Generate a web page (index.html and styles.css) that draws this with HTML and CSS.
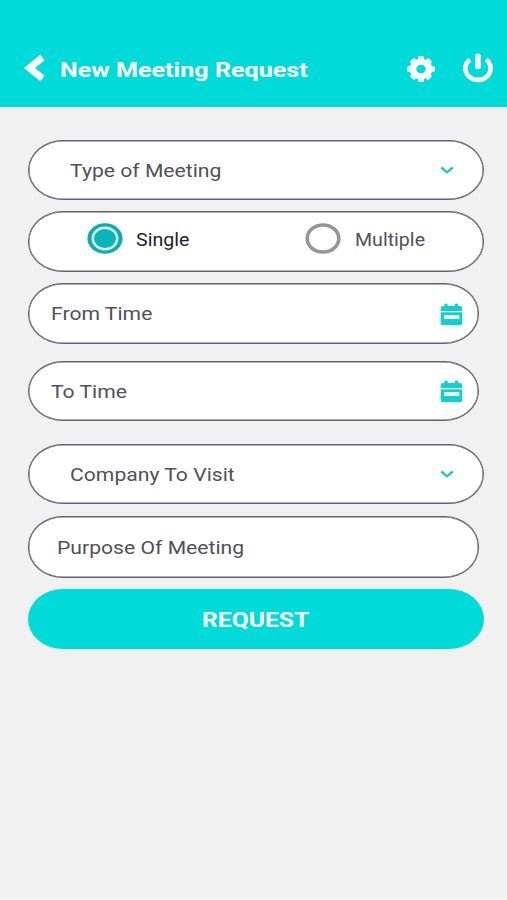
FILE: index.html
```
<!DOCTYPE html>
<html lang="en">

<head>
	<meta charset="UTF-8">
	<title>New Meeting Request</title>
	<link rel="stylesheet" href="styles.css">
</head>

<body>
	<header class="topbar">
		<svg class="back" width="22" height="28" viewBox="0 0 22 28"><path d="M19.500 3.500L6.500 14L19.500 24.500" fill="none" stroke="#fff" stroke-width="7"/></svg>
		<h1><span class="text title">New Meeting Request</span></h1>
		<svg class="gear" width="30" height="28" viewBox="0 0 30 28">
			<g fill="#fff">
				<ellipse cx="15" cy="14" rx="11.300" ry="10.300"/>
				<rect x="12" y="1" width="6" height="26" rx="1.5"/>
				<rect x="1" y="11.2" width="28" height="5.6" rx="1.5"/>
				<rect x="12" y="1" width="6" height="26" rx="1.5" transform="rotate(45 15 14)"/>
				<rect x="12" y="1" width="6" height="26" rx="1.5" transform="rotate(-45 15 14)"/>
			</g>
			<ellipse cx="15" cy="14" rx="4.7" ry="4.3" fill="#00dad8"/>
		</svg>
		<svg class="power" width="32" height="30" viewBox="0 0 32 30"><path d="M8 6.7A12.6 11.4 0 1 0 24 6.7" fill="none" stroke="#fff" stroke-width="4.600"/><path d="M16 3.3V13.5" stroke="#fff" stroke-width="5.500" stroke-linecap="round"/></svg>
	</header>

	<form class="form">
		<div class="field select type">
			<span class="text">Type of Meeting</span>
			<svg class="chevron" width="14" height="9" viewBox="0 0 14 9"><path d="M1.300 1.500L7 6.300L12.700 1.500" fill="none" stroke="#22c4c4" stroke-width="2.4"/></svg>
		</div>

		<div class="field radios">
			<label class="option">
				<svg width="36" height="31" viewBox="0 0 36 31"><ellipse cx="18" cy="15.5" rx="17.6" ry="15.2" fill="#12abae"/><ellipse cx="18" cy="15.5" rx="12.2" ry="10.8" fill="#08b5b8" stroke="#d9fbfb" stroke-width="2.4"/></svg>
				<span class="text">Single</span>
			</label>
			<label class="option">
				<svg width="36" height="31" viewBox="0 0 36 31"><ellipse cx="18" cy="15.5" rx="15.8" ry="13.5" fill="#fff" stroke="#969696" stroke-width="3.6"/></svg>
				<span class="text">Multiple</span>
			</label>
		</div>

		<div class="field time from">
			<span class="text">From Time</span>
			<svg class="calendar" width="23" height="23" viewBox="0 0 23 23"><path d="M.7 8V5.2Q.7 3 3 3H4.300V1.800Q4.300.5 6 .5T7.700 1.800V3H14.800V1.800Q14.800.5 16.500.5T18.200 1.800V3H20Q22.300 3 22.300 5.200V8Z" fill="#13d0cd"/><path fill-rule="evenodd" d="M.7 9.200H22.300V20.300Q22.300 22.300 20.300 22.300H2.700Q.7 22.300.7 20.300ZM4 12.200V16H19.300V12.200Z" fill="#13d0cd"/></svg>
		</div>

		<div class="field time to">
			<span class="text">To Time</span>
			<svg class="calendar" width="23" height="23" viewBox="0 0 23 23"><path d="M.7 8V5.2Q.7 3 3 3H4.300V1.800Q4.300.5 6 .5T7.700 1.800V3H14.800V1.800Q14.800.5 16.500.5T18.200 1.800V3H20Q22.300 3 22.300 5.200V8Z" fill="#13d0cd"/><path fill-rule="evenodd" d="M.7 9.200H22.300V20.300Q22.300 22.300 20.300 22.300H2.700Q.7 22.300.7 20.300ZM4 12.200V16H19.300V12.200Z" fill="#13d0cd"/></svg>
		</div>

		<div class="field select company">
			<span class="text">Company To Visit</span>
			<svg class="chevron" width="14" height="9" viewBox="0 0 14 9"><path d="M1.300 1.500L7 6.300L12.700 1.500" fill="none" stroke="#22c4c4" stroke-width="2.4"/></svg>
		</div>

		<div class="field purpose">
			<span class="text">Purpose Of Meeting</span>
		</div>

		<button type="button" class="submit"><span class="text">REQUEST</span></button>
	</form>
</body>

</html>
```
FILE: styles.css
```
body {
  margin: 0;
  height: 900px;
  box-sizing: border-box;
  background-color: #f1f1f2;
  border-bottom: 2px solid #f6f6f6;
  font-family: Roboto, "Liberation Sans", sans-serif;
  color: #50505c;
}

/* wide lettering */
.text {
  display: inline-block;
  white-space: nowrap;
  transform: scaleX(1.175);
  transform-origin: left center;
}

.topbar {
  display: flex;
  align-items: center;
  height: 107px;
  padding: 31px 13px 0 23px;
  box-sizing: border-box;
  background-color: #00dad8;
  color: #fff;
}

.topbar h1 {
  flex: 1;
  margin: 2px 0 0 15px;
  font-size: 20.5px;
  line-height: 24px;
  font-weight: 700;
}

.title {
  transform: scaleX(1.225);
}

.back {
  margin-bottom: 2px;
}

.gear {
  margin-right: 26px;
}

.power {
  margin-bottom: 2px;
}

.form {
  padding: 33px 23px 0 28px;
}

.field {
  display: flex;
  align-items: center;
  height: 60px;
  margin-bottom: 12px;
  padding-top: 1px;
  box-sizing: border-box;
  border: 1px solid #62626c;
  box-shadow: inset 0 0 0 0.5px #62626c;
  border-radius: 35px / 30px;
  background-color: #fff;
  font-size: 18px;
  line-height: 22px;
}

.select {
  justify-content: space-between;
  padding-left: 41px;
  padding-right: 29px;
}

.type {
  margin-bottom: 11px;
}

.radios {
  height: 61px;
  padding: 0 0 6px 58px;
  font-size: 17.5px;
}

.option {
  display: flex;
  flex-shrink: 0;
  align-items: center;
  gap: 13px;
  width: 218px;
}

.option:last-child {
  width: auto;
  gap: 14px;
}

.option:first-child {
  color: #222;
}

.option .text {
  padding-top: 2px;
  transform: scaleX(1.12);
}

.time,
.purpose {
  margin-right: 5px;
}

.time {
  justify-content: space-between;
  padding-left: 22px;
  padding-right: 15px;
}

.from {
  height: 61px;
  margin-top: -1px;
  margin-bottom: 17px;
}

.to {
  margin-bottom: 23px;
}

.purpose {
  height: 62px;
  padding-left: 28px;
  margin-bottom: 11px;
}

.submit {
  display: block;
  width: 100%;
  height: 60px;
  padding: 2px 0 0;
  border: none;
  border-radius: 35px / 30px;
  background-color: #00dad8;
  color: #fff;
  font-family: inherit;
  font-size: 21px;
  font-weight: 700;
}

.submit .text {
  transform-origin: center;
}
```
